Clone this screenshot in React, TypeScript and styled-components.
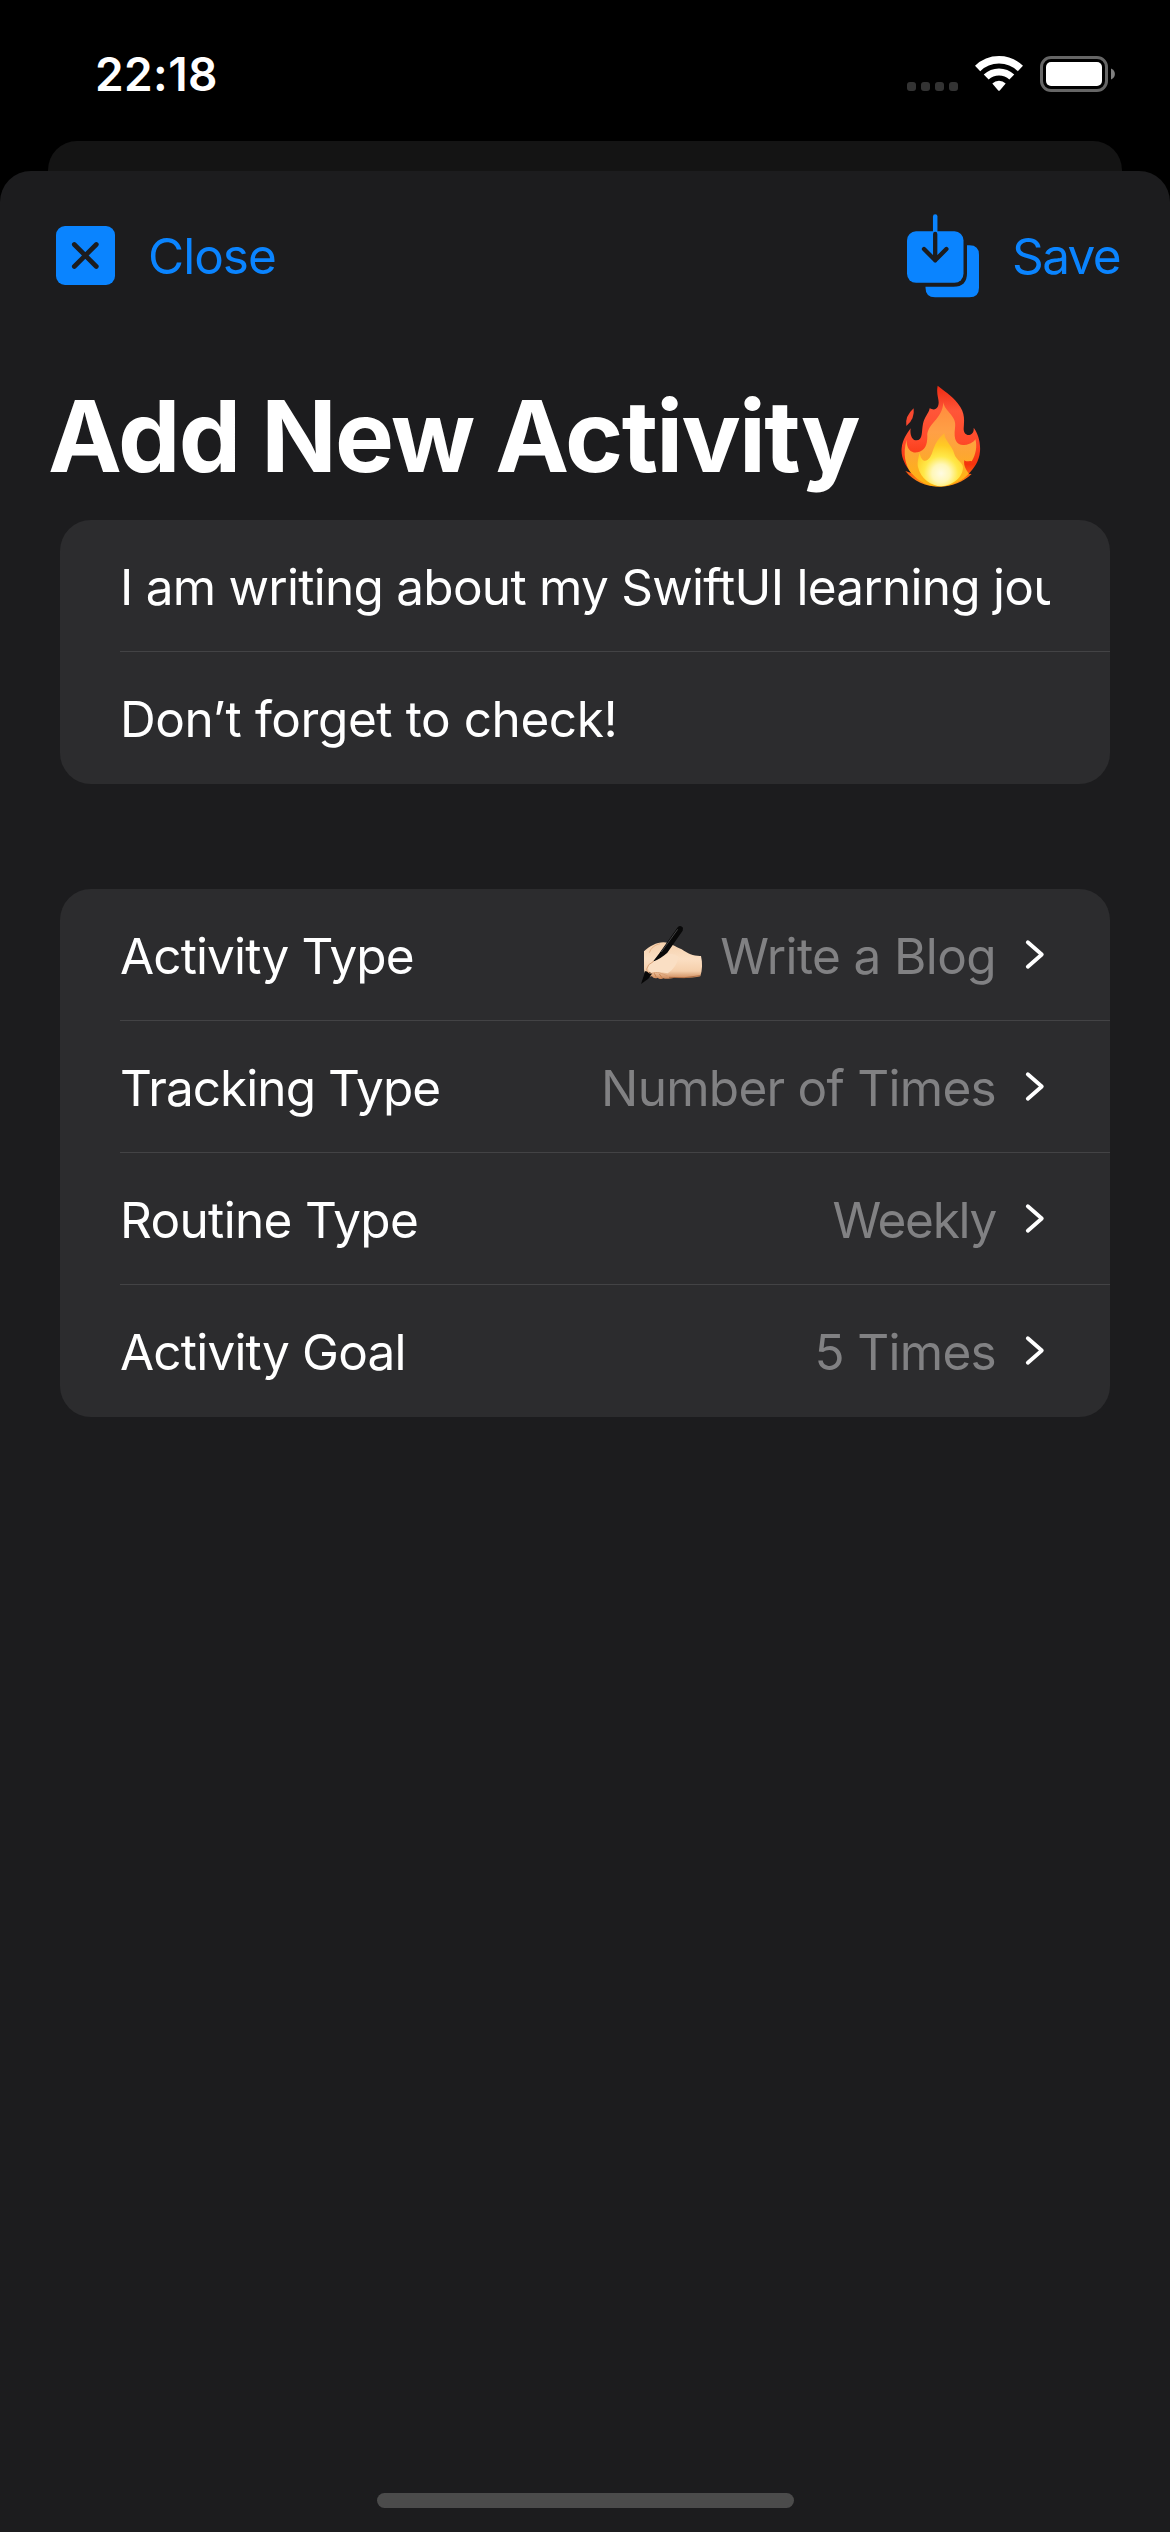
import React from "react";
import styled, { createGlobalStyle } from "styled-components";

const GlobalStyle = createGlobalStyle`
  body {
    margin: 0;
    background: #000;
  }
  #root {
    width: 1170px;
  }
`;

const Screen = styled.div`
  display: flex;
  flex-direction: column;
  width: 1170px;
  height: 2532px;
  overflow: hidden;
  background: #000;
  color: #fff;
  font-family: Inter, "Liberation Sans", sans-serif;
`;

const StatusBar = styled.header`
  box-sizing: border-box;
  display: flex;
  align-items: flex-start;
  justify-content: space-between;
  height: 141px;
  padding: 46px 54px 0 95px;
`;

const Clock = styled.time`
  font-size: 46px;
  font-weight: 600;
  line-height: 56px;
  letter-spacing: 0.39px;
`;

const StatusIcons = styled.div`
  display: flex;
  padding-top: 9px;
`;

const SignalDots = styled.div`
  display: flex;
  gap: 5px;
  padding-top: 27px;
  margin-right: 17px;
`;

const SignalDot = styled.i`
  width: 9px;
  height: 9px;
  border-radius: 3px;
  background: #333;
`;

const Battery = styled.svg`
  margin-left: 17px;
`;

const BackSheet = styled.div`
  height: 30px;
  margin: 0 48px;
  border-radius: 29px 29px 0 0;
  background: #141414;
`;

const Sheet = styled.main`
  flex: 1;
  display: flex;
  flex-direction: column;
  border-radius: 31px 31px 0 0;
  background: #1c1c1e;
`;

const Toolbar = styled.nav`
  display: flex;
  align-items: center;
  justify-content: space-between;
  height: 170px;
  padding: 0 50px 0 56px;
`;

const ToolbarButton = styled.button<{ $tracking: number }>`
  display: flex;
  align-items: center;
  gap: 33px;
  margin: 0;
  padding: 0;
  border: 0;
  background: none;
  color: #0a84ff;
  font: inherit;
  font-size: 49.5px;
  line-height: 60px;
  letter-spacing: ${(p) => p.$tracking}px;
`;

const Title = styled.h1`
  display: flex;
  align-items: center;
  gap: 42px;
  margin: 35px 0 0 48px;
  font-size: 99px;
  font-weight: 700;
  line-height: 120px;
  letter-spacing: -1.68px;
  white-space: nowrap;
`;

const Card = styled.section<{ $gap: number }>`
  margin: ${(p) => p.$gap}px 60px 0;
  padding-left: 60px;
  border-radius: 31px;
  background: #2c2c2e;
`;

const Row = styled.div`
  box-sizing: border-box;
  display: flex;
  align-items: center;
  height: 132px;
  padding: 37px 60px 34px 0;
  border-bottom: 1px solid #434345;
  font-size: 49.5px;
  line-height: 60px;
  white-space: nowrap;

  &:last-child {
    border-bottom-color: transparent;
  }
`;

const Field = styled.div<{ $tracking: number }>`
  flex: 1;
  overflow: hidden;
  letter-spacing: ${(p) => p.$tracking}px;
`;

const Label = styled.span<{ $tracking: number }>`
  flex: 1;
  letter-spacing: ${(p) => p.$tracking}px;
`;

const Value = styled.span<{ $tracking: number }>`
  display: flex;
  align-items: center;
  gap: 17px;
  color: #818183;
  letter-spacing: ${(p) => p.$tracking}px;
`;

const ChevronIcon = styled.svg`
  margin: 0 5px 0 29px;
`;

const HomeIndicator = styled.div`
  align-self: center;
  width: 417px;
  height: 15px;
  margin: auto 0 24px 1px;
  border-radius: 8px;
  background: #4b4b4b;
`;

const WifiGlyph = () => (
  <svg width="48" height="36" viewBox="0 0 48 36" fill="none">
    <path d="M2.6 13.5a30.6 30.6 0 0 1 42.8 0" stroke="#fff" strokeWidth="7.4" />
    <path d="M11.2 22.1a18.4 18.4 0 0 1 25.6 0" stroke="#fff" strokeWidth="7" />
    <path d="M17.3 28.4a10 10 0 0 1 13.4 0L25 35.3q-1 1.1-2 0z" fill="#fff" />
  </svg>
);

const BatteryGlyph = () => (
  <Battery width="76" height="38" viewBox="0 0 76 38" fill="none">
    <rect x="1.5" y="2.5" width="65" height="33" rx="9.5" stroke="#666" strokeWidth="3" />
    <rect x="6" y="7" width="56" height="24" rx="5" fill="#fff" />
    <path d="M71 13.5c5.2 2 5.2 9 0 11z" fill="#808080" />
  </Battery>
);

const CloseGlyph = () => (
  <svg width="59" height="60" viewBox="0 0 59 60">
    <rect width="59" height="59" rx="9" fill="#0a84ff" />
    <path d="M18.3 18.5l22 22M40.3 18.5l-22 22" stroke="#1c1c1e" strokeWidth="4.7" strokeLinecap="round" />
  </svg>
);

const SaveGlyph = () => (
  <svg width="72" height="84" viewBox="0 0 72 84" fill="none">
    <path
      d="M60 31.2h2.5q9.500 0 9.500 9.500v33q0 9.500-9.500 9.500h-34.500q-9.500 0-9.500-9.500v-1h28q13.500 0 13.500-13.500z"
      fill="#0a84ff"
    />
    <rect y="17.3" width="56.5" height="51.5" rx="9" fill="#0a84ff" />
    <path d="M28.2 2.4v15" stroke="#0a84ff" strokeWidth="4.5" strokeLinecap="round" />
    <path
      d="M28.2 20v26.500M17 35l11.200 11.300L39.400 35"
      stroke="#1c1c1e"
      strokeWidth="4.3"
      strokeLinecap="round"
      strokeLinejoin="round"
    />
  </svg>
);

const FireGlyph = () => (
  <svg width="80" height="102" viewBox="60 45 240 306">
    <defs>
      <linearGradient id="fire-outer" x1="0" y1="47" x2="0" y2="350" gradientUnits="userSpaceOnUse">
        <stop offset="0" stopColor="#ee2a12" />
        <stop offset=".25" stopColor="#ff5638" />
        <stop offset=".55" stopColor="#ff4a2a" />
        <stop offset=".78" stopColor="#f5330c" />
        <stop offset="1" stopColor="#ff9a1a" />
      </linearGradient>
      <linearGradient id="fire-middle" x1="0" y1="97" x2="0" y2="350" gradientUnits="userSpaceOnUse">
        <stop offset="0" stopColor="#ff8a3c" />
        <stop offset=".35" stopColor="#ffa046" />
        <stop offset=".6" stopColor="#fda634" />
        <stop offset="1" stopColor="#ffb60c" />
      </linearGradient>
      <radialGradient id="fire-core" cx="180" cy="310" r="112" gradientUnits="userSpaceOnUse">
        <stop offset="0" stopColor="#fffbe2" />
        <stop offset=".24" stopColor="#fff7b8" />
        <stop offset=".46" stopColor="#ffe848" />
        <stop offset=".75" stopColor="#ffcb24" />
        <stop offset="1" stopColor="#ffb52e" />
      </radialGradient>
    </defs>
    <path d="M98 115Q102 148 76 168Q71 139 98 115Z" fill="#f8482f" />
    <path
      d="M170 47C196 68 221 83 238 111C253 135 249 154 248 177C248 191 258 198 268 194C276 190 279 184 278 173C291 190 299 216 297 244C295 274 278 297 263 311L272 312C248 336 211 350 177 350C134 350 98 334 73 303L91 309C72 286 59 261 62 234C65 208 78 190 89 175C86 194 93 211 106 211C127 210 121 184 126 161C131 140 143 131 146 115C157 121 167 119 171 109C178 90 164 78 170 47Z"
      fill="url(#fire-outer)"
    />
    <path
      d="M187 97C191 126 229 137 222 174C217 211 228 226 249 225C271 224 282 211 283 207C289 229 285 253 272 274C264 271 256 278 250 270C245 290 264 310 263 311C245 333 211 347 180 349C142 349 115 337 90 308C74 288 64 251 77 209C76 239 92 250 110 247C132 242 139 225 139 199C137 162 185 148 187 97Z"
      fill="url(#fire-middle)"
    />
    <path
      d="M190 190C190 211 213 226 220 252C226 271 246 278 246 292C246 322 215 347 181 349C151 348 119 326 111 291C108 276 113 260 116 248C119 266 127 277 139 270C160 257 151 221 190 190Z"
      fill="url(#fire-core)"
    />
  </svg>
);

const WritingHandGlyph = () => (
  <svg width="62" height="60" viewBox="63 48 186 180">
    <defs>
      <linearGradient id="hand-skin" x1="0" y1="96" x2="0" y2="208" gradientUnits="userSpaceOnUse">
        <stop offset="0" stopColor="#f5d0ac" />
        <stop offset=".45" stopColor="#fbdfc3" />
        <stop offset=".78" stopColor="#f5cfab" />
        <stop offset="1" stopColor="#c98252" />
      </linearGradient>
    </defs>
    <path
      d="M72 124C88 109 109 97 130 97C151 98 166 111 185 118C204 131 222 139 243 138C248 158 247 181 241 199C220 205 187 204 162 203C151 206 139 208 130 205C124 210 116 206 113 203C106 207 99 204 96 199C78 201 71 188 72 171Z"
      fill="url(#hand-skin)"
    />
    <path d="M76 183L97 190L85 206L63 222Z" fill="#080808" />
    <path d="M173 52Q181 44 189 53L188 62L142 128Q126 143 98 156L118 130Z" fill="#090909" />
    <path d="M173 58L124 126" stroke="#454545" strokeWidth="3" fill="none" />
    <path d="M84 176Q84 163 101 154Q124 151 140 132Q160 128 176 140Q170 172 143 190Q113 184 94 190Z" fill="#fadfc4" />
    <path d="M120 101Q95 107 88 128" stroke="#e3ae82" strokeWidth="2.500" fill="none" />
    <path d="M101 154Q82 163 80 177Q81 190 94 190C113 184 124 190 143 198" stroke="#d59a6d" strokeWidth="2.500" fill="none" />
    <path d="M103 190l6 12M118 192l9 12" stroke="#c78250" strokeWidth="3" fill="none" />
    <path d="M147 202Q191 207 240 197" stroke="#9d5c35" strokeWidth="3" fill="none" opacity=".7" />
  </svg>
);

const Chevron = () => (
  <ChevronIcon width="20" height="34" viewBox="0 0 20 34" fill="none">
    <path d="M2.8 3.2L16.800 15.500L2.800 27.800" stroke="#fff" strokeWidth="3.8" strokeLinecap="round" strokeLinejoin="round" />
  </ChevronIcon>
);

interface Setting {
  label: string;
  labelTracking: number;
  value: string;
  valueTracking: number;
  icon?: React.ReactNode;
}

const settings: Setting[] = [
  { label: "Activity Type", labelTracking: -0.88, value: "Write a Blog", valueTracking: -0.62, icon: <WritingHandGlyph /> },
  { label: "Tracking Type", labelTracking: -0.94, value: "Number of Times", valueTracking: -0.73 },
  { label: "Routine Type", labelTracking: -0.66, value: "Weekly", valueTracking: -1.3 },
  { label: "Activity Goal", labelTracking: -0.8, value: "5 Times", valueTracking: -0.7 },
];

export default function App() {
  return (
    <Screen>
      <GlobalStyle />
      <StatusBar>
        <Clock>22:18</Clock>
        <StatusIcons>
          <SignalDots>
            <SignalDot />
            <SignalDot />
            <SignalDot />
            <SignalDot />
          </SignalDots>
          <WifiGlyph />
          <BatteryGlyph />
        </StatusIcons>
      </StatusBar>
      <BackSheet />
      <Sheet>
        <Toolbar>
          <ToolbarButton $tracking={-0.99}>
            <CloseGlyph />
            Close
          </ToolbarButton>
          <ToolbarButton $tracking={-1.65}>
            <SaveGlyph />
            Save
          </ToolbarButton>
        </Toolbar>
        <Title>
          Add New Activity
          <FireGlyph />
        </Title>
        <Card $gap={24}>
          <Row>
            <Field $tracking={-0.74}>I am writing about my SwiftUI learning jou</Field>
          </Row>
          <Row>
            <Field $tracking={-0.42}>Don’t forget to check!</Field>
          </Row>
        </Card>
        <Card $gap={105}>
          {settings.map((s) => (
            <Row key={s.label}>
              <Label $tracking={s.labelTracking}>{s.label}</Label>
              <Value $tracking={s.valueTracking}>
                {s.icon}
                {s.value}
              </Value>
              <Chevron />
            </Row>
          ))}
        </Card>
        <HomeIndicator />
      </Sheet>
    </Screen>
  );
}
